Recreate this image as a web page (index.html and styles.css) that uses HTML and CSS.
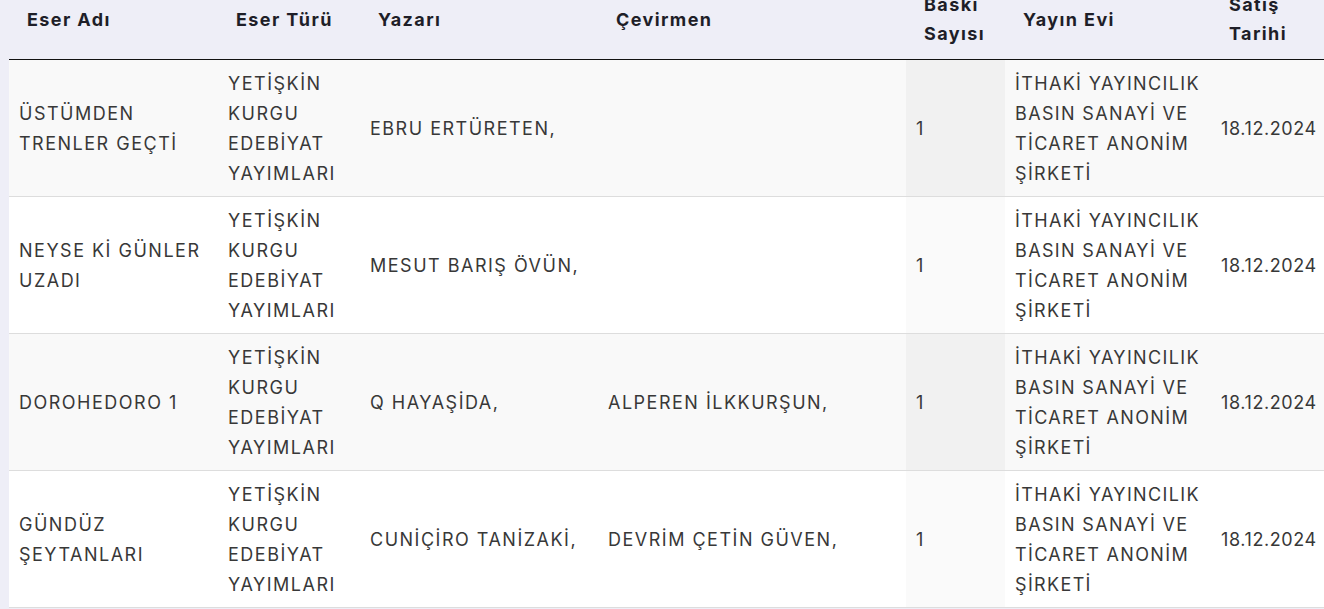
FILE: index.html
```html
<!DOCTYPE html>
<html lang="tr">
<head>
<meta charset="utf-8">
<title>Eserler</title>
<link rel="stylesheet" href="styles.css">
</head>
<body>
<div class="wrap">
<table class="books">
<colgroup>
<col class="c-name"><col class="c-type"><col class="c-author"><col class="c-trans"><col class="c-print"><col class="c-pub"><col class="c-date">
</colgroup>
<thead>
<tr>
<th>Eser Adı</th>
<th>Eser Türü</th>
<th>Yazarı</th>
<th>Çevirmen</th>
<th>Baskı Sayısı</th>
<th>Yayın Evi</th>
<th>Satış Tarihi</th>
</tr>
</thead>
<tbody>
<tr class="odd">
<td>ÜSTÜMDEN TRENLER GEÇTİ</td>
<td>YETİŞKİN KURGU EDEBİYAT YAYIMLARI</td>
<td>EBRU ERTÜRETEN,</td>
<td></td>
<td class="sorted">1</td>
<td class="pub">İTHAKİ YAYINCILIK BASIN SANAYİ VE TİCARET ANONİM ŞİRKETİ</td>
<td class="date">18.12.2024</td>
</tr>
<tr class="even">
<td>NEYSE Kİ GÜNLER UZADI</td>
<td>YETİŞKİN KURGU EDEBİYAT YAYIMLARI</td>
<td>MESUT BARIŞ ÖVÜN,</td>
<td></td>
<td class="sorted">1</td>
<td class="pub">İTHAKİ YAYINCILIK BASIN SANAYİ VE TİCARET ANONİM ŞİRKETİ</td>
<td class="date">18.12.2024</td>
</tr>
<tr class="odd">
<td>DOROHEDORO 1</td>
<td>YETİŞKİN KURGU EDEBİYAT YAYIMLARI</td>
<td>Q HAYAŞİDA,</td>
<td>ALPEREN İLKKURŞUN,</td>
<td class="sorted">1</td>
<td class="pub">İTHAKİ YAYINCILIK BASIN SANAYİ VE TİCARET ANONİM ŞİRKETİ</td>
<td class="date">18.12.2024</td>
</tr>
<tr class="even">
<td>GÜNDÜZ ŞEYTANLARI</td>
<td>YETİŞKİN KURGU EDEBİYAT YAYIMLARI</td>
<td>CUNİÇİRO TANİZAKİ,</td>
<td>DEVRİM ÇETİN GÜVEN,</td>
<td class="sorted">1</td>
<td class="pub">İTHAKİ YAYINCILIK BASIN SANAYİ VE TİCARET ANONİM ŞİRKETİ</td>
<td class="date">18.12.2024</td>
</tr>
</tbody>
</table>
</div>
</body>
</html>
```

FILE: styles.css
```css
html, body {
  margin: 0;
  padding: 0;
  background: #eeeef7;
  overflow: hidden;
}
.wrap {
  margin-top: -19px;
  padding-left: 9px;
}
.books {
  border-collapse: collapse;
  table-layout: fixed;
  width: 1315px;
  font-family: Inter, "Open Sans", sans-serif;
  font-size: 18px;
}
.c-name { width: 209px; }
.c-type { width: 142px; }
.c-author { width: 238px; }
.c-trans { width: 308px; }
.c-print { width: 99px; }
.c-pub { width: 206px; }
.c-date { width: 113px; }
.books th {
  text-align: left;
  vertical-align: middle;
  padding: 9px 16px 11px 18px;
  line-height: 29px;
  font-weight: 700;
  letter-spacing: 1.4px;
  color: #1e1e28;
  border-bottom: 1px solid #111;
  background: #eeeef7;
}
.books td {
  padding: 9px 10px 7px 10px;
  line-height: 30px;
  vertical-align: middle;
  color: #383838;
  font-weight: 400;
  letter-spacing: 1.5px;
  border-bottom: 1px solid #ddd;
}
.books td.pub {
  padding-right: 4px;
  letter-spacing: 1.35px;
}
.books tr.odd td { background: #f9f9f9; }
.books tr.even td { background: #fff; }
.books tr.odd td.sorted { background: #f1f1f1; }
.books tr.even td.sorted { background: #fafafa; }
.books td.date {
  white-space: nowrap;
  letter-spacing: 0.6px;
}
```
